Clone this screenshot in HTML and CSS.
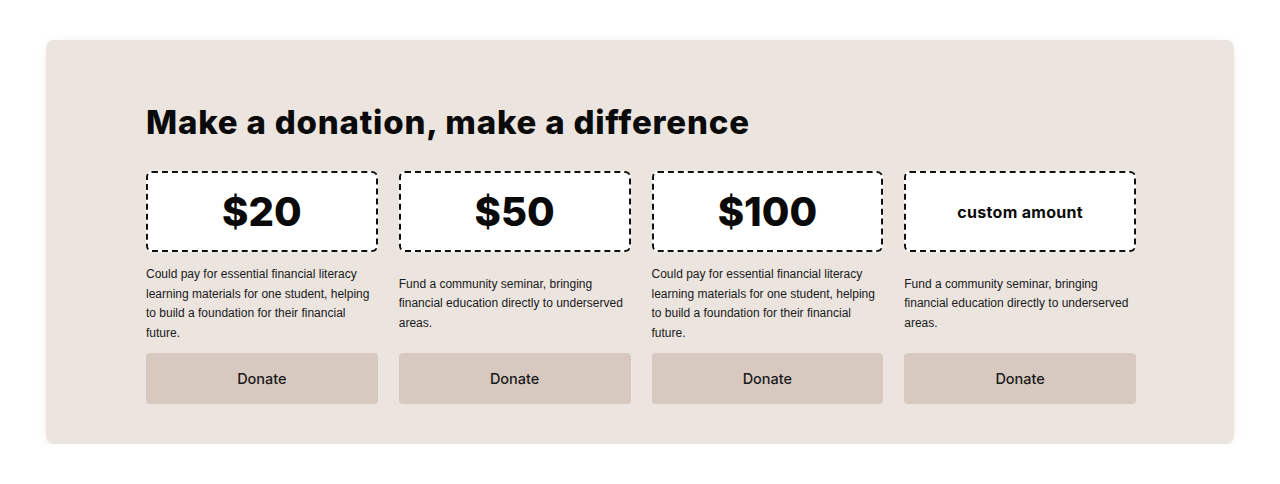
FILE: index.html
```html
<!DOCTYPE html>
<html>
<head>
<meta charset="utf-8">
<link rel="stylesheet" href="styles.css">
</head>
<body>
<section class="panel">
  <h1 class="title">Make a donation, make a difference</h1>
  <div class="grid">
    <div class="card">
      <div class="amount">$20</div>
      <p class="desc">Could pay for essential financial literacy learning materials for one student, helping to build a foundation for their financial future.</p>
      <button class="donate">Donate</button>
    </div>
    <div class="card">
      <div class="amount">$50</div>
      <p class="desc">Fund a community seminar, bringing financial education directly to underserved areas.</p>
      <button class="donate">Donate</button>
    </div>
    <div class="card">
      <div class="amount">$100</div>
      <p class="desc">Could pay for essential financial literacy learning materials for one student, helping to build a foundation for their financial future.</p>
      <button class="donate">Donate</button>
    </div>
    <div class="card">
      <div class="amount custom">custom amount</div>
      <p class="desc">Fund a community seminar, bringing financial education directly to underserved areas.</p>
      <button class="donate">Donate</button>
    </div>
  </div>
</section>
</body>
</html>
```
FILE: styles.css
```css
* { box-sizing: border-box; }
html, body { margin: 0; padding: 0; background: #ffffff; }
body { padding: 40px 46px 0 46px; font-family: "Liberation Sans", Arial, sans-serif; }
.panel {
  background: #ebe4df;
  border-radius: 8px;
  box-shadow: 0 2px 12px rgba(0,0,0,0.06);
  padding: 59px 98px 40px 100px;
  height: 404px;
}
.title {
  margin: 0 0 26px 0;
  font-family: Inter, "DejaVu Sans", sans-serif;
  font-weight: 800;
  font-size: 33px;
  line-height: 46px;
  letter-spacing: 0.8px;
  color: #0a0a0a;
}
.grid {
  display: grid;
  grid-template-columns: repeat(4, 1fr);
  column-gap: 21px;
}
.card { display: flex; flex-direction: column; }
.amount {
  height: 81px;
  background: #ffffff;
  border: 2px dashed #111;
  border-radius: 6px;
  display: flex;
  align-items: center;
  justify-content: center;
  font-family: Inter, "DejaVu Sans", sans-serif;
  font-weight: 800;
  font-size: 40px;
  color: #0a0a0a;
}
.amount.custom { font-size: 16px; font-weight: 700; letter-spacing: 0.3px; }
.desc {
  margin: 0;
  height: 101px;
  padding-top: 3px;
  display: flex;
  align-items: center;
  font-size: 12px;
  line-height: 19.5px;
  color: #1a1a1a;
}
.donate {
  height: 51px;
  border: none;
  border-radius: 4px;
  background: #d7c9c0;
  font-family: Inter, "Liberation Sans", sans-serif;
  font-weight: 500;
  font-size: 14.5px;
  color: #1a1a1a;
  cursor: pointer;
}
```
